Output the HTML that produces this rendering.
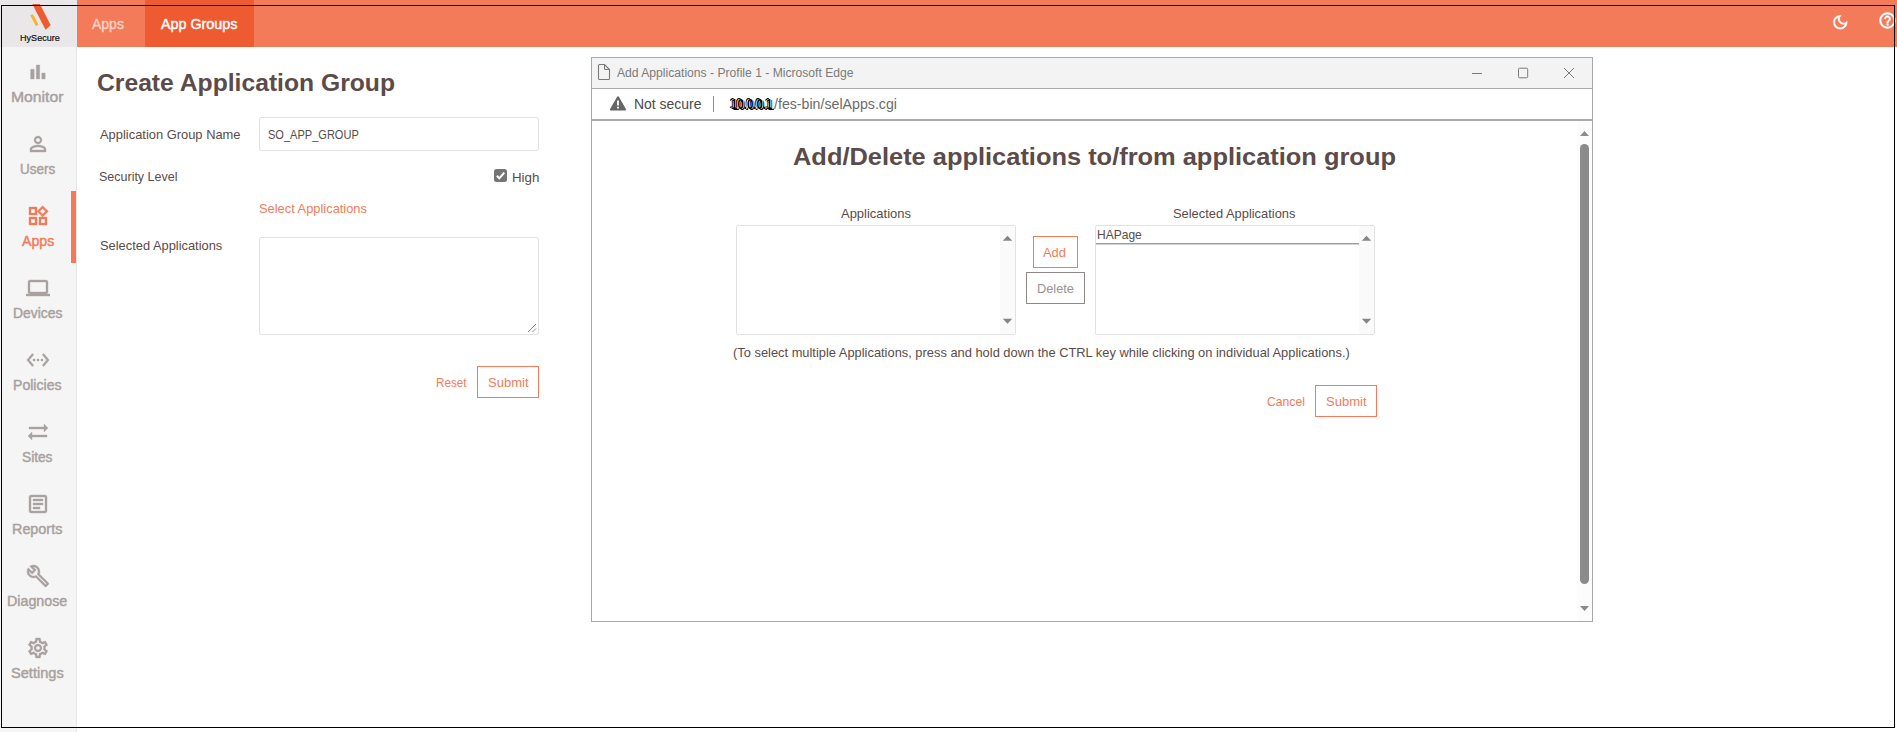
<!DOCTYPE html>
<html lang="en">
<head>
<meta charset="utf-8">
<title>HySecure - Create Application Group</title>
<style>
html,body{margin:0;padding:0;}
body{width:1897px;height:732px;position:relative;overflow:hidden;background:#fff;font-family:"Liberation Sans",sans-serif;}
.abs,.t,svg.i{position:absolute;}
.t{white-space:nowrap;transform-origin:0 0;display:block;}
.box{position:absolute;box-sizing:border-box;}
#sidebar{left:0;top:0;width:77px;height:732px;background:#f5f5f5;border-right:1px solid #e6e6e6;}
#logo{left:0;top:0;width:77px;height:47px;background:#e9e7e7;}
#topbar{left:77px;top:0;width:1820px;height:47px;background:#f37b5a;}
#tab-active{left:145px;top:0;width:109px;height:47px;background:#ef5b30;}
#activebar{left:71px;top:191px;width:5px;height:72px;background:#f37b5a;}
.inp{border:1px solid #e2e2e2;background:#fff;border-radius:2px;}
.btn{border:1px solid #f37b5a;background:#fff;}
#frame{left:1px;top:5px;width:1894px;height:723px;border:1px solid #000;pointer-events:none;}
#popup{left:591px;top:57px;width:1002px;height:565px;border:1px solid #a9a9a9;background:#fff;}
#titlebar{left:592px;top:58px;width:1000px;height:30px;background:#f3f3f3;}
</style>
</head>
<body>

<!-- ============ left navigation ============ -->
<nav aria-label="Main navigation">
<div id="sidebar" class="box"></div>
<div id="logo" class="box"></div>
<svg class="i" style="left:0;top:0" width="77" height="47" viewBox="0 0 77 47">
  <polygon points="32.3,4 39.9,4 50.7,25.2 45.5,29.8" fill="#ef5b30"/>
  <polygon points="30.1,14.9 33.2,14.5 38.3,24.6 36,26.3" fill="#fdb02c"/>
</svg>
<div id="activebar" class="box"></div>
<svg class="i" style="left:25.70px;top:60.00px" width="24" height="24" viewBox="0 0 24 24"><path fill="#a9a1a0" stroke="#a9a1a0" stroke-width="0.35" d="M4.6 9.2h3.6V19H4.6zM10.300 5h3.400v14h-3.400zm5.500 8h3.400v6h-3.400z"/></svg>
<svg class="i" style="left:25.70px;top:132.00px" width="24" height="24" viewBox="0 0 24 24"><path fill="#a9a1a0" stroke="#a9a1a0" stroke-width="0.35" d="M12 5.9c1.16 0 2.1.94 2.1 2.1s-.94 2.1-2.1 2.1S9.9 9.16 9.9 8s.94-2.1 2.1-2.1m0 9c2.97 0 6.1 1.46 6.1 2.1v1.1H5.9V17c0-.64 3.13-2.1 6.1-2.1M12 4C9.79 4 8 5.79 8 8s1.79 4 4 4 4-1.79 4-4-1.79-4-4-4zm0 9c-2.67 0-8 1.34-8 4v3h16v-3c0-2.66-5.33-4-8-4z"/></svg>
<svg class="i" style="left:25.70px;top:204.00px" width="24" height="24" viewBox="0 0 24 24"><path fill="#f37b5a" stroke="#f37b5a" stroke-width="0.35" d="M16.66 4.52l2.83 2.83-2.83 2.83-2.83-2.83 2.83-2.83M9 5v4H5V5h4m10 10v4h-4v-4h4M9 15v4H5v-4h4m7.66-13.31L11 7.34 16.66 13l5.66-5.66-5.66-5.65zM11 3H3v8h8V3zm10 10h-8v8h8v-8zm-10 0H3v8h8v-8z"/></svg>
<svg class="i" style="left:25.70px;top:276.00px" width="24" height="24" viewBox="0 0 24 24"><path fill="#a9a1a0" stroke="#a9a1a0" stroke-width="0.35" d="M20 18c1.1 0 2-.9 2-2V6c0-1.1-.9-2-2-2H4c-1.1 0-2 .9-2 2v10c0 1.1.9 2 2 2H0v2h24v-2h-4zM4 6h16v10H4V6z"/></svg>
<svg class="i" style="left:25.70px;top:348.00px" width="24" height="24" viewBox="0 0 24 24"><path fill="#a9a1a0" stroke="#a9a1a0" stroke-width="0.35" d="M7.77 6.76L6.23 5.48.82 12l5.41 6.52 1.54-1.28L3.42 12l4.35-5.24zM7 13h2v-2H7v2zm10-2h-2v2h2v-2zm-6 2h2v-2h-2v2zm6.77-7.52l-1.54 1.28L20.58 12l-4.35 5.24 1.54 1.28L23.18 12l-5.41-6.52z"/></svg>
<svg class="i" style="left:25.70px;top:420.00px" width="24" height="24" viewBox="0 0 24 24"><path fill="#a9a1a0" stroke="#a9a1a0" stroke-width="0.35" d="M22 8l-4-4v3H3v2h15v3l4-4zM2 16l4 4v-3h15v-2H6v-3l-4 4z"/></svg>
<svg class="i" style="left:25.70px;top:492.00px" width="24" height="24" viewBox="0 0 24 24"><path fill="#a9a1a0" stroke="#a9a1a0" stroke-width="0.35" d="M19 5v14H5V5h14m0-2H5c-1.1 0-2 .9-2 2v14c0 1.1.9 2 2 2h14c1.1 0 2-.9 2-2V5c0-1.1-.9-2-2-2zM14 17H7v-2h7v2zm3-4H7v-2h10v2zm0-4H7V7h10v2z"/></svg>
<svg class="i" style="left:25.70px;top:564.00px" width="24" height="24" viewBox="0 0 24 24"><path fill="#a9a1a0" stroke="#a9a1a0" stroke-width="0.35" d="M22.61 18.99l-9.08-9.08c.93-2.34.45-5.1-1.44-7C9.79.61 6.21.4 3.66 2.26L7.5 6.11 6.08 7.52 2.25 3.69C.39 6.23.6 9.82 2.9 12.11c1.86 1.86 4.57 2.35 6.89 1.48l9.11 9.11c.39.39 1.02.39 1.41 0l2.3-2.3c.4-.38.4-1.01 0-1.41zm-3 1.6l-9.46-9.46c-.61.45-1.29.72-2 .82-1.36.2-2.79-.21-3.83-1.25C3.37 9.76 2.93 8.5 3 7.26l3.09 3.09 4.24-4.24-3.09-3.09c1.24-.07 2.49.37 3.44 1.31 1.08 1.08 1.49 2.57 1.24 3.96-.12.71-.42 1.37-.88 1.96l9.45 9.45-.88.89z"/></svg>
<svg class="i" style="left:25.70px;top:636.00px" width="24" height="24" viewBox="0 0 24 24"><path fill="#a9a1a0" stroke="#a9a1a0" stroke-width="0.35" d="M19.43 12.98c.04-.32.07-.64.07-.98 0-.34-.03-.66-.07-.98l2.11-1.65c.19-.15.24-.42.12-.64l-2-3.46c-.09-.16-.26-.25-.44-.25-.06 0-.12.01-.17.03l-2.49 1c-.52-.4-1.08-.73-1.69-.98l-.38-2.65C14.46 2.18 14.25 2 14 2h-4c-.25 0-.46.18-.49.42l-.38 2.65c-.61.25-1.17.59-1.69.98l-2.49-1c-.06-.02-.12-.03-.18-.03-.17 0-.34.09-.43.25l-2 3.46c-.13.22-.07.49.12.64l2.11 1.65c-.04.32-.07.65-.07.98 0 .33.03.66.07.98l-2.11 1.65c-.19.15-.24.42-.12.64l2 3.46c.09.16.26.25.44.25.06 0 .12-.01.17-.03l2.49-1c.52.4 1.08.73 1.69.98l.38 2.65c.03.24.24.42.49.42h4c.25 0 .46-.18.49-.42l.38-2.65c.61-.25 1.17-.59 1.69-.98l2.49 1c.06.02.12.03.18.03.17 0 .34-.09.43-.25l2-3.46c.12-.22.07-.49-.12-.64l-2.11-1.65zm-1.98-1.71c.04.31.05.52.05.73 0 .21-.02.43-.05.73l-.14 1.13.89.7 1.08.84-.7 1.21-1.27-.51-1.04-.42-.9.68c-.43.32-.84.56-1.25.73l-1.06.43-.16 1.13-.2 1.35h-1.4l-.19-1.35-.16-1.13-1.06-.43c-.43-.18-.83-.41-1.23-.71l-.91-.7-1.06.43-1.27.51-.7-1.21 1.08-.84.89-.7-.14-1.13c-.03-.31-.05-.54-.05-.74s.02-.43.05-.73l.14-1.13-.89-.7-1.08-.84.7-1.21 1.27.51 1.04.42.9-.68c.43-.32.84-.56 1.25-.73l1.06-.43.16-1.13.2-1.35h1.39l.19 1.35.16 1.13 1.06.43c.43.18.83.41 1.23.71l.91.7 1.06-.43 1.27-.51.7 1.21-1.07.85-.89.7.14 1.13zM12 8c-2.21 0-4 1.79-4 4s1.79 4 4 4 4-1.79 4-4-1.79-4-4-4zm0 6c-1.1 0-2-.9-2-2s.9-2 2-2 2 .9 2 2-.9 2-2 2z"/></svg>
<span class="t" style='left:20.32px;top:33px;font:400 10px/12px "Liberation Sans", sans-serif;color:#111111;transform:scale(0.9075,0.875);-webkit-text-stroke:0.2px #111111;'>HySecure</span>
<span class="t" style='left:11.04px;top:88px;font:400 14px/18px "Liberation Sans", sans-serif;color:#a9a1a0;transform:scaleX(1.1216);-webkit-text-stroke:0.45px #a9a1a0;'>Monitor</span>
<span class="t" style='left:19.96px;top:160px;font:400 14px/18px "Liberation Sans", sans-serif;color:#a9a1a0;transform:scaleX(0.9632);-webkit-text-stroke:0.45px #a9a1a0;'>Users</span>
<span class="t" style='left:21.86px;top:232px;font:400 14px/18px "Liberation Sans", sans-serif;color:#f37b5a;transform:scaleX(1.0097);-webkit-text-stroke:0.45px #f37b5a;'>Apps</span>
<span class="t" style='left:12.92px;top:304px;font:400 14px/18px "Liberation Sans", sans-serif;color:#a9a1a0;transform:scaleX(0.9915);-webkit-text-stroke:0.45px #a9a1a0;'>Devices</span>
<span class="t" style='left:13.24px;top:376px;font:400 14px/18px "Liberation Sans", sans-serif;color:#a9a1a0;transform:scaleX(1.0054);-webkit-text-stroke:0.45px #a9a1a0;'>Policies</span>
<span class="t" style='left:21.62px;top:448px;font:400 14px/18px "Liberation Sans", sans-serif;color:#a9a1a0;transform:scaleX(0.9780);-webkit-text-stroke:0.45px #a9a1a0;'>Sites</span>
<span class="t" style='left:12.32px;top:520px;font:400 14px/18px "Liberation Sans", sans-serif;color:#a9a1a0;transform:scaleX(1.0266);-webkit-text-stroke:0.45px #a9a1a0;'>Reports</span>
<span class="t" style='left:7.41px;top:592px;font:400 14px/18px "Liberation Sans", sans-serif;color:#a9a1a0;transform:scaleX(1.0185);-webkit-text-stroke:0.45px #a9a1a0;'>Diagnose</span>
<span class="t" style='left:10.51px;top:664px;font:400 14px/18px "Liberation Sans", sans-serif;color:#a9a1a0;transform:scaleX(1.0421);-webkit-text-stroke:0.45px #a9a1a0;'>Settings</span>

</nav>

<!-- ============ top bar ============ -->
<header>
<div id="topbar" class="box"></div>
<div id="tab-active" class="box"></div>
<span class="t" style='left:92.49px;top:15px;font:400 14px/18px "Liberation Sans", sans-serif;color:#fbd0c4;transform:scaleX(0.9988);-webkit-text-stroke:0.4px #fbd0c4;'>Apps</span>
<span class="t" style='left:161.18px;top:15px;font:400 14px/18px "Liberation Sans", sans-serif;color:#ffffff;transform:scaleX(1.0213);-webkit-text-stroke:0.4px #ffffff;'>App Groups</span>
<svg class="i" style="left:1830.85px;top:12.75px" width="18.5" height="18.5" viewBox="0 0 24 24"><path fill="#fff" stroke="#fff" stroke-width="0.5" d="M9.37 5.51C9.19 6.15 9.1 6.82 9.1 7.5c0 4.08 3.32 7.4 7.4 7.4.68 0 1.35-.09 1.99-.27C17.45 17.19 14.93 19 12 19c-3.86 0-7-3.14-7-7 0-2.93 1.81-5.45 4.37-6.49zM12 3c-4.97 0-9 4.03-9 9s4.03 9 9 9 9-4.03 9-9c0-.46-.04-.92-.1-1.36-.98 1.37-2.58 2.26-4.4 2.26-2.98 0-5.4-2.42-5.4-5.4 0-1.81.89-3.42 2.26-4.4-.44-.06-.9-.1-1.36-.1z"/></svg>
<svg class="i" style="left:1878.00px;top:11.20px" width="19" height="19" viewBox="0 0 24 24"><path fill="#fff" stroke="#fff" stroke-width="0.6" d="M11 18h2v-2h-2v2zm1-16C6.48 2 2 6.48 2 12s4.48 10 10 10 10-4.48 10-10S17.52 2 12 2zm0 18c-4.41 0-8-3.59-8-8s3.59-8 8-8 8 3.59 8 8-3.59 8-8 8zm0-14c-2.21 0-4 1.79-4 4h2c0-1.1.9-2 2-2s2 .9 2 2c0 2-3 1.75-3 5h2c0-2.25 3-2.5 3-5 0-2.21-1.79-4-4-4z"/></svg>

</header>

<!-- ============ main form ============ -->
<main>
<div class="box inp" style="left:259px;top:117px;width:280px;height:34px"></div>
<div class="box inp" style="left:259px;top:237px;width:280px;height:98px"></div>
<svg class="i" style="left:527px;top:323px" width="10" height="10" viewBox="0 0 10 10"><path d="M9 1 1 9M9 5.5 5.5 9" stroke="#8a8a8a" stroke-width="1" fill="none"/></svg>
<div class="box" style="left:494px;top:169px;width:13px;height:13px;background:#757575;border-radius:2.5px"></div>
<svg class="i" style="left:494px;top:169px" width="13" height="13" viewBox="0 0 13 13"><path d="M2.8 6.8 5.3 9.3 10.3 3.6" stroke="#fff" stroke-width="2" fill="none"/></svg>
<div class="box btn" style="left:477px;top:366px;width:62px;height:32px"></div>
<span class="t" style='left:97.01px;top:69px;font:700 23px/29px "Liberation Sans", sans-serif;color:#5b4b49;transform:scaleX(1.0729);'>Create Application Group</span>
<span class="t" style='left:99.74px;top:127px;font:400 13px/16px "Liberation Sans", sans-serif;color:#5b4b49;transform:scaleX(0.9923);'>Application Group Name</span>
<span class="t" style='left:268.15px;top:127px;font:400 13px/16px "Liberation Sans", sans-serif;color:#5b4b49;transform:scaleX(0.8488);'>SO_APP_GROUP</span>
<span class="t" style='left:99.48px;top:169px;font:400 13px/16px "Liberation Sans", sans-serif;color:#5b4b49;transform:scaleX(0.9607);'>Security Level</span>
<span class="t" style='left:511.69px;top:170px;font:400 13px/16px "Liberation Sans", sans-serif;color:#5b4b49;transform:scaleX(1.0240);'>High</span>
<span class="t" style='left:258.74px;top:201px;font:400 13px/16px "Liberation Sans", sans-serif;color:#f37b5a;transform:scaleX(0.9892);'>Select Applications</span>
<span class="t" style='left:99.51px;top:238px;font:400 13px/16px "Liberation Sans", sans-serif;color:#5b4b49;transform:scaleX(0.9895);'>Selected Applications</span>
<span class="t" style='left:435.51px;top:375px;font:400 13px/16px "Liberation Sans", sans-serif;color:#f37b5a;transform:scaleX(0.9001);'>Reset</span>
<span class="t" style='left:487.62px;top:375px;font:400 13px/16px "Liberation Sans", sans-serif;color:#f37b5a;transform:scaleX(1.0034);'>Submit</span>

</main>

<!-- ============ popup window (Microsoft Edge) ============ -->
<section aria-label="Add Applications popup window">
<div id="popup" class="box"></div>
<div id="titlebar" class="box"></div>
<div class="box" style="left:592px;top:88px;width:1000px;height:1px;background:#a9a9a9"></div>
<div class="box" style="left:592px;top:119px;width:1000px;height:2px;background:#a9a9a9"></div>
<svg class="i" style="left:597px;top:63px" width="14" height="18" viewBox="0 0 14 18"><path d="M2.5 1.500h5l5 5v9a1 1 0 0 1-1 1h-9a1 1 0 0 1-1-1v-13a1 1 0 0 1 1-1zM7.500 1.500v4a1 1 0 0 0 1 1h4" stroke="#7a7a7a" fill="none" stroke-width="1.1"/></svg>
<svg class="i" style="left:609px;top:95px" width="18" height="17" viewBox="0 0 18 17"><path d="M9 1.2a1 1 0 0 1 .87.5l7 12.3a1 1 0 0 1-.87 1.5H2a1 1 0 0 1-.87-1.5l7-12.3A1 1 0 0 1 9 1.200z" fill="#656565"/><path d="M8.1 5.5h1.800v5H8.100zM8.100 11.700h1.800v1.800H8.100z" fill="#fff"/></svg>
<svg class="i" style="left:1460px;top:58px" width="130" height="30" viewBox="0 0 130 30"><path d="M12 15.500h10M59.500 10.200h7.200a1 1 0 0 1 1 1v7.600a1 1 0 0 1-1 1h-7.200a1 1 0 0 1-1-1v-7.600a1 1 0 0 1 1-1zM104 10 114 20M114 10 104 20" stroke="#7a7a7a" fill="none" stroke-width="1"/></svg>
<div class="box" style="left:713px;top:96px;width:1px;height:16px;background:#8a8a8a"></div>
<!-- page scrollbar -->
<div class="box" style="left:1577px;top:121px;width:15px;height:500px;background:#fcfcfc"></div>
<div class="box" style="left:1580px;top:144px;width:9px;height:440px;background:#8b8b8b;border-radius:5px"></div>
<svg class="i" style="left:1577px;top:121px" width="15" height="500" viewBox="0 0 15 500"><path d="M3 15 7.5 10 12 15zM3 485 7.5 490 12 485z" fill="#8b8b8b"/></svg>
<!-- list boxes -->
<div class="box inp" style="left:736px;top:225px;width:280px;height:110px"></div>
<div class="box inp" style="left:1095px;top:225px;width:280px;height:110px"></div>
<div class="box" style="left:1000px;top:226px;width:15px;height:108px;background:#fafafa"></div>
<div class="box" style="left:1359px;top:226px;width:15px;height:108px;background:#fafafa"></div>
<svg class="i" style="left:1000px;top:226px" width="15" height="108" viewBox="0 0 15 108"><path d="M2.8 14.8 7.5 9.8 12.2 14.8zM2.800 92.800 7.5 97.800 12.200 92.800z" fill="#858585"/></svg>
<svg class="i" style="left:1359px;top:226px" width="15" height="108" viewBox="0 0 15 108"><path d="M2.8 14.8 7.5 9.8 12.2 14.8zM2.800 92.800 7.5 97.800 12.200 92.800z" fill="#858585"/></svg>
<div class="box" style="left:1096px;top:243px;width:263px;height:2px;background:linear-gradient(#9c9c9c 50%,#d2d2d2 50%)"></div>
<div class="box btn" style="left:1033px;top:236px;width:45px;height:32px"></div>
<div class="box" style="left:1026px;top:272px;width:59px;height:32px;border:1px solid #8f8888;background:#fff"></div>
<div class="box btn" style="left:1315px;top:385px;width:62px;height:32px"></div>
<span class="t" style='left:617.16px;top:66px;font:400 12px/15px "Liberation Sans", sans-serif;color:#7b7b7b;transform:scaleX(1.0102);'>Add Applications - Profile 1 - Microsoft Edge</span>
<span class="t" style='left:633.90px;top:95px;font:400 14px/18px "Liberation Sans", sans-serif;color:#4a4a4a;transform:scaleX(0.9972);'>Not secure</span>
<span class="t" style='left:730.90px;top:95px;font:700 14px/18px "Liberation Sans", sans-serif;color:#000000;transform:scaleX(0.8190);text-shadow:1px 0 0 #fff,2px 1px 0 #000,-1px 0 0 #fff,-2px -1px 0 #000;'>10.0.0.1</span>
<span class="t" style='left:774.23px;top:95px;font:400 14px/18px "Liberation Sans", sans-serif;color:#6b6b6b;transform:scaleX(1.0128);'>/fes-bin/selApps.cgi</span>
<span class="t" style='left:792.76px;top:143px;font:700 23px/29px "Liberation Sans", sans-serif;color:#5b4b49;transform:scaleX(1.1050);'>Add/Delete applications to/from application group</span>
<span class="t" style='left:840.77px;top:206px;font:400 13px/16px "Liberation Sans", sans-serif;color:#5b4b49;transform:scaleX(0.9980);'>Applications</span>
<span class="t" style='left:1173.29px;top:206px;font:400 13px/16px "Liberation Sans", sans-serif;color:#5b4b49;transform:scaleX(0.9904);'>Selected Applications</span>
<span class="t" style='left:1096.96px;top:227px;font:400 13px/16px "Liberation Sans", sans-serif;color:#5b4b49;transform:scaleX(0.9255);'>HAPage</span>
<span class="t" style='left:1043.47px;top:245px;font:400 13px/16px "Liberation Sans", sans-serif;color:#f37b5a;transform:scaleX(0.9895);'>Add</span>
<span class="t" style='left:1036.59px;top:281px;font:400 13px/16px "Liberation Sans", sans-serif;color:#9a9494;transform:scaleX(0.9833);'>Delete</span>
<span class="t" style='left:732.85px;top:345px;font:400 13px/16px "Liberation Sans", sans-serif;color:#5b4b49;transform:scaleX(0.9898);'>(To select multiple Applications, press and hold down the CTRL key while clicking on individual Applications.)</span>
<span class="t" style='left:1266.59px;top:394px;font:400 13px/16px "Liberation Sans", sans-serif;color:#f37b5a;transform:scaleX(0.9351);'>Cancel</span>
<span class="t" style='left:1325.57px;top:394px;font:400 13px/16px "Liberation Sans", sans-serif;color:#f37b5a;transform:scaleX(1.0009);'>Submit</span>

</section>

<!-- black screenshot frame -->
<div id="frame" class="box"></div>
</body>
</html>
